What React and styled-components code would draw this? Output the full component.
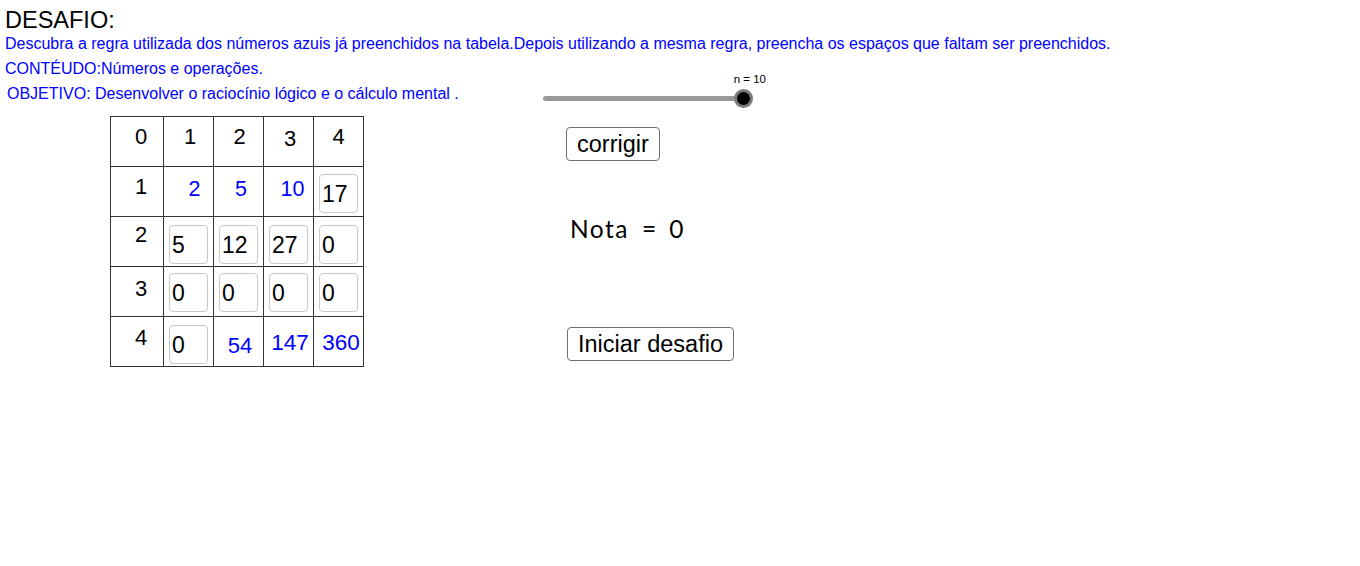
import React from "react";
import styled, { createGlobalStyle } from "styled-components";

const Global = createGlobalStyle`
  html, body { margin: 0; padding: 0; background: #fff; }
  body { font-family: "Liberation Sans", Arial, sans-serif; }
  #root { width: 1360px; height: 566px; overflow: hidden; }
`;

const Page = styled.div`
  box-sizing: border-box;
  width: 1360px;
  height: 566px;
  padding-top: 10px;
  display: flex;
  flex-direction: column;
`;

const Title = styled.div`
  font-size: 23.5px;
  line-height: 21px;
  color: #000;
  padding-left: 5px;
`;

const InfoLine = styled.div`
  font-size: 16px;
  line-height: 25px;
  color: #0000ff;
  padding-left: ${(p) => p.$indent || 5}px;
  white-space: nowrap;
`;

const Body = styled.div`
  display: flex;
  align-items: flex-start;
`;

const LeftColumn = styled.div`
  width: 540px;
  display: flex;
  flex-direction: column;
`;

const RightColumn = styled.div`
  display: flex;
  flex-direction: column;
  align-items: flex-start;
  padding-top: 17px;
`;

const Grid = styled.div`
  display: grid;
  grid-template-columns: 53px repeat(4, 50px);
  grid-auto-rows: 50px;
  width: max-content;
  margin: 10px 0 0 110px;
  border-top: 1px solid #333;
  border-left: 1px solid #333;
`;

const Cell = styled.div`
  box-sizing: border-box;
  border-right: 1px solid #333;
  border-bottom: 1px solid #333;
  display: flex;
  flex-direction: column;
  align-items: stretch;
`;

const HeadNum = styled.div`
  font-size: 22px;
  line-height: 24px;
  color: #000;
  text-align: center;
  padding-top: ${(p) => p.$top}px;
  padding-left: ${(p) => p.$shift}px;
`;

const BlueNum = styled.div`
  font-size: ${(p) => p.$size}px;
  line-height: 25px;
  color: #0000ff;
  text-align: center;
  padding-top: ${(p) => p.$top}px;
  padding-left: ${(p) => p.$shift}px;
`;

const InputBox = styled.div`
  box-sizing: border-box;
  width: 39px;
  height: 39px;
  margin: ${(p) => p.$top}px 0 0 5px;
  border: 1px solid #c9c9c9;
  border-radius: 4px;
  background: #fff;
  font-size: 23px;
  line-height: 33px;
  padding: 3px 0 0 2px;
  color: #000;
`;

const SliderBlock = styled.div`
  display: flex;
  flex-direction: column;
  width: 226px;
  margin-left: 1px;
`;

const SliderLabel = styled.div`
  align-self: flex-end;
  font-size: 11.5px;
  line-height: 13px;
  color: #000;
  padding-right: 1px;
`;

const SliderTrack = styled.div`
  display: flex;
  align-items: center;
  height: 20px;
  margin-top: 2px;
  padding-left: 2px;
`;

const TrackBar = styled.div`
  width: 202px;
  height: 5px;
  border-radius: 3px;
  background: #999;
`;

const Thumb = styled.div`
  box-sizing: border-box;
  width: 19px;
  height: 19px;
  margin-left: -11px;
  border-radius: 50%;
  background: #000;
  border: 3px solid #7a7a7a;
`;

const Button = styled.button`
  box-sizing: border-box;
  height: 34px;
  margin: ${(p) => p.$top}px 0 0 ${(p) => p.$left}px;
  padding: 0 10px 0 10px;
  border: 1px solid #6f6f6f;
  border-radius: 4px;
  background: #fff;
  font-family: "Liberation Sans", Arial, sans-serif;
  font-size: 23.5px;
  line-height: 32px;
  color: #000;
  cursor: pointer;
`;

const Nota = styled.div`
  display: flex;
  align-items: baseline;
  gap: 13px;
  margin: 54px 0 0 30px;
  font-family: Lato, "DejaVu Sans", sans-serif;
  font-size: 24.5px;
  line-height: 27px;
  color: #000;
`;

const NotaWord = styled.span`
  letter-spacing: 1.5px;
`;

const headerTops = [8, 8, 6, 10, 9];
const colHeaderTops = [8, 8, 8, 10, 8];
const colHeaderShift = [8, 3, 2, 3, 0];

const rows = [
  [null, { b: "2", s: 21.5, t: 10, x: 12 }, { b: "5", s: 21.5, t: 10, x: 5 }, { b: "10", s: 21.5, t: 10, x: 8 }, { i: "17" }],
  [null, { i: "5" }, { i: "12" }, { i: "27" }, { i: "0" }],
  [null, { i: "0" }, { i: "0" }, { i: "0" }, { i: "0" }],
  [null, { i: "0" }, { b: "54", s: 22, t: 16, x: 3 }, { b: "147", s: 22.5, t: 13, x: 3 }, { b: "360", s: 22.5, t: 13, x: 5 }],
];

const inputTops = [7, 8, 6, 8];

export default function App() {
  return (
    <>
      <Global />
      <Page>
        <Title>DESAFIO:</Title>
        <InfoLine>
          Descubra a regra utilizada dos números azuis já preenchidos na tabela.Depois utilizando a mesma regra, preencha os espaços que faltam ser preenchidos.
        </InfoLine>
        <Body>
          <LeftColumn>
            <InfoLine>CONTÉUDO:Números e operações.</InfoLine>
            <InfoLine $indent={7}>OBJETIVO: Desenvolver o raciocínio lógico e o cálculo mental .</InfoLine>
            <Grid>
              {[0, 1, 2, 3, 4].map((c) => (
                <Cell key={"h" + c}>
                  <HeadNum $top={colHeaderTops[c]} $shift={colHeaderShift[c]}>{c}</HeadNum>
                </Cell>
              ))}
              {rows.map((row, r) =>
                row.map((cell, c) => (
                  <Cell key={r + "-" + c}>
                    {c === 0 ? (
                      <HeadNum $top={headerTops[r + 1]} $shift={8}>{r + 1}</HeadNum>
                    ) : cell.i !== undefined ? (
                      <InputBox $top={inputTops[r]}>{cell.i}</InputBox>
                    ) : (
                      <BlueNum $size={cell.s} $top={cell.t} $shift={cell.x}>{cell.b}</BlueNum>
                    )}
                  </Cell>
                ))
              )}
            </Grid>
          </LeftColumn>
          <RightColumn>
            <SliderBlock>
              <SliderLabel>n = 10</SliderLabel>
              <SliderTrack>
                <TrackBar />
                <Thumb />
              </SliderTrack>
            </SliderBlock>
            <Button $top={19} $left={26}>corrigir</Button>
            <Nota>
              <NotaWord>Nota</NotaWord>
              <span>=</span>
              <span>0</span>
            </Nota>
            <Button $top={85} $left={27}>Iniciar desafio</Button>
          </RightColumn>
        </Body>
      </Page>
    </>
  );
}
